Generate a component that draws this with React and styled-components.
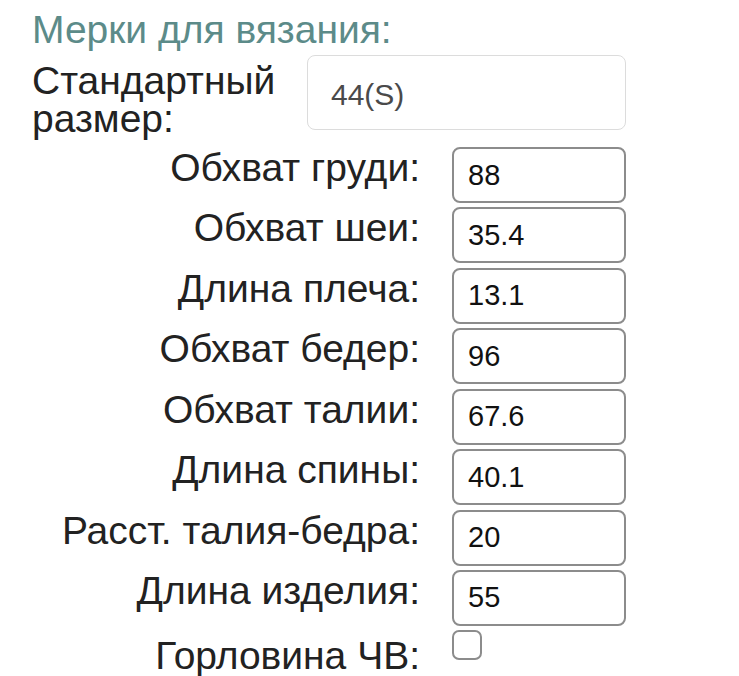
import React from "react";
import styled, { createGlobalStyle } from "styled-components";

const GlobalStyle = createGlobalStyle`
  body {
    margin: 0;
    background: #fff;
    font-family: "Liberation Sans", Arial, sans-serif;
  }
`;

const Page = styled.div`
  padding: 8px 0 0 32px;
  width: 739px;
  height: 676px;
  box-sizing: border-box;
  overflow: hidden;
`;

const Title = styled.div`
  font-size: 39px;
  line-height: 44px;
  color: #5c8b89;
  margin-bottom: 3px;
`;

const SizeRow = styled.div`
  display: flex;
  align-items: flex-start;
  margin-bottom: 9px;
`;

const SizeLabel = styled.div`
  width: 275px;
  padding-top: 7px;
  font-size: 39px;
  line-height: 38px;
  color: #222;
`;

const SizeSelect = styled.select`
  appearance: none;
  width: 319px;
  height: 75px;
  box-sizing: border-box;
  border: 1px solid #dcdcdc;
  border-radius: 8px;
  background: #fff;
  padding: 3px 0 0 23px;
  font-family: inherit;
  font-size: 30px;
  color: #4a4a4a;
  outline: none;
`;

const Fields = styled.div`
  display: grid;
  grid-template-columns: 388px 174px;
  column-gap: 32px;
  row-gap: 4.43px;
`;

const Label = styled.div`
  text-align: right;
  font-size: 39px;
  line-height: 42px;
  color: #222;
  white-space: nowrap;
  margin-top: ${(p) => p.$shift || 0}px;
`;

const Field = styled.input`
  width: 174px;
  height: 56px;
  box-sizing: border-box;
  border: 2px solid #8c8c8c;
  border-radius: 8px;
  padding: 0 0 0 14px;
  font-family: inherit;
  font-size: 29px;
  color: #111;
  background: #fff;
  outline: none;
`;

const Check = styled.input`
  appearance: none;
  margin: 0;
  width: 30px;
  height: 30px;
  box-sizing: border-box;
  border: 2px solid #8c8c8c;
  border-radius: 7px;
  background: #fff;
`;

const measures = [
  ["Обхват груди:", "88"],
  ["Обхват шеи:", "35.4"],
  ["Длина плеча:", "13.1"],
  ["Обхват бедер:", "96"],
  ["Обхват талии:", "67.6"],
  ["Длина спины:", "40.1"],
  ["Расст. талия-бедра:", "20"],
  ["Длина изделия:", "55"],
];

export default function App() {
  return (
    <>
      <GlobalStyle />
      <Page>
        <Title>Мерки для вязания:</Title>
        <SizeRow>
          <SizeLabel>Стандартный размер:</SizeLabel>
          <SizeSelect defaultValue="44">
            <option value="44">44(S)</option>
          </SizeSelect>
        </SizeRow>
        <Fields>
          {measures.map(([label, value]) => (
            <React.Fragment key={label}>
              <Label>{label}</Label>
              <Field type="text" defaultValue={value} />
            </React.Fragment>
          ))}
          <Label $shift={5}>Горловина ЧВ:</Label>
          <div>
            <Check type="checkbox" />
          </div>
        </Fields>
      </Page>
    </>
  );
}
